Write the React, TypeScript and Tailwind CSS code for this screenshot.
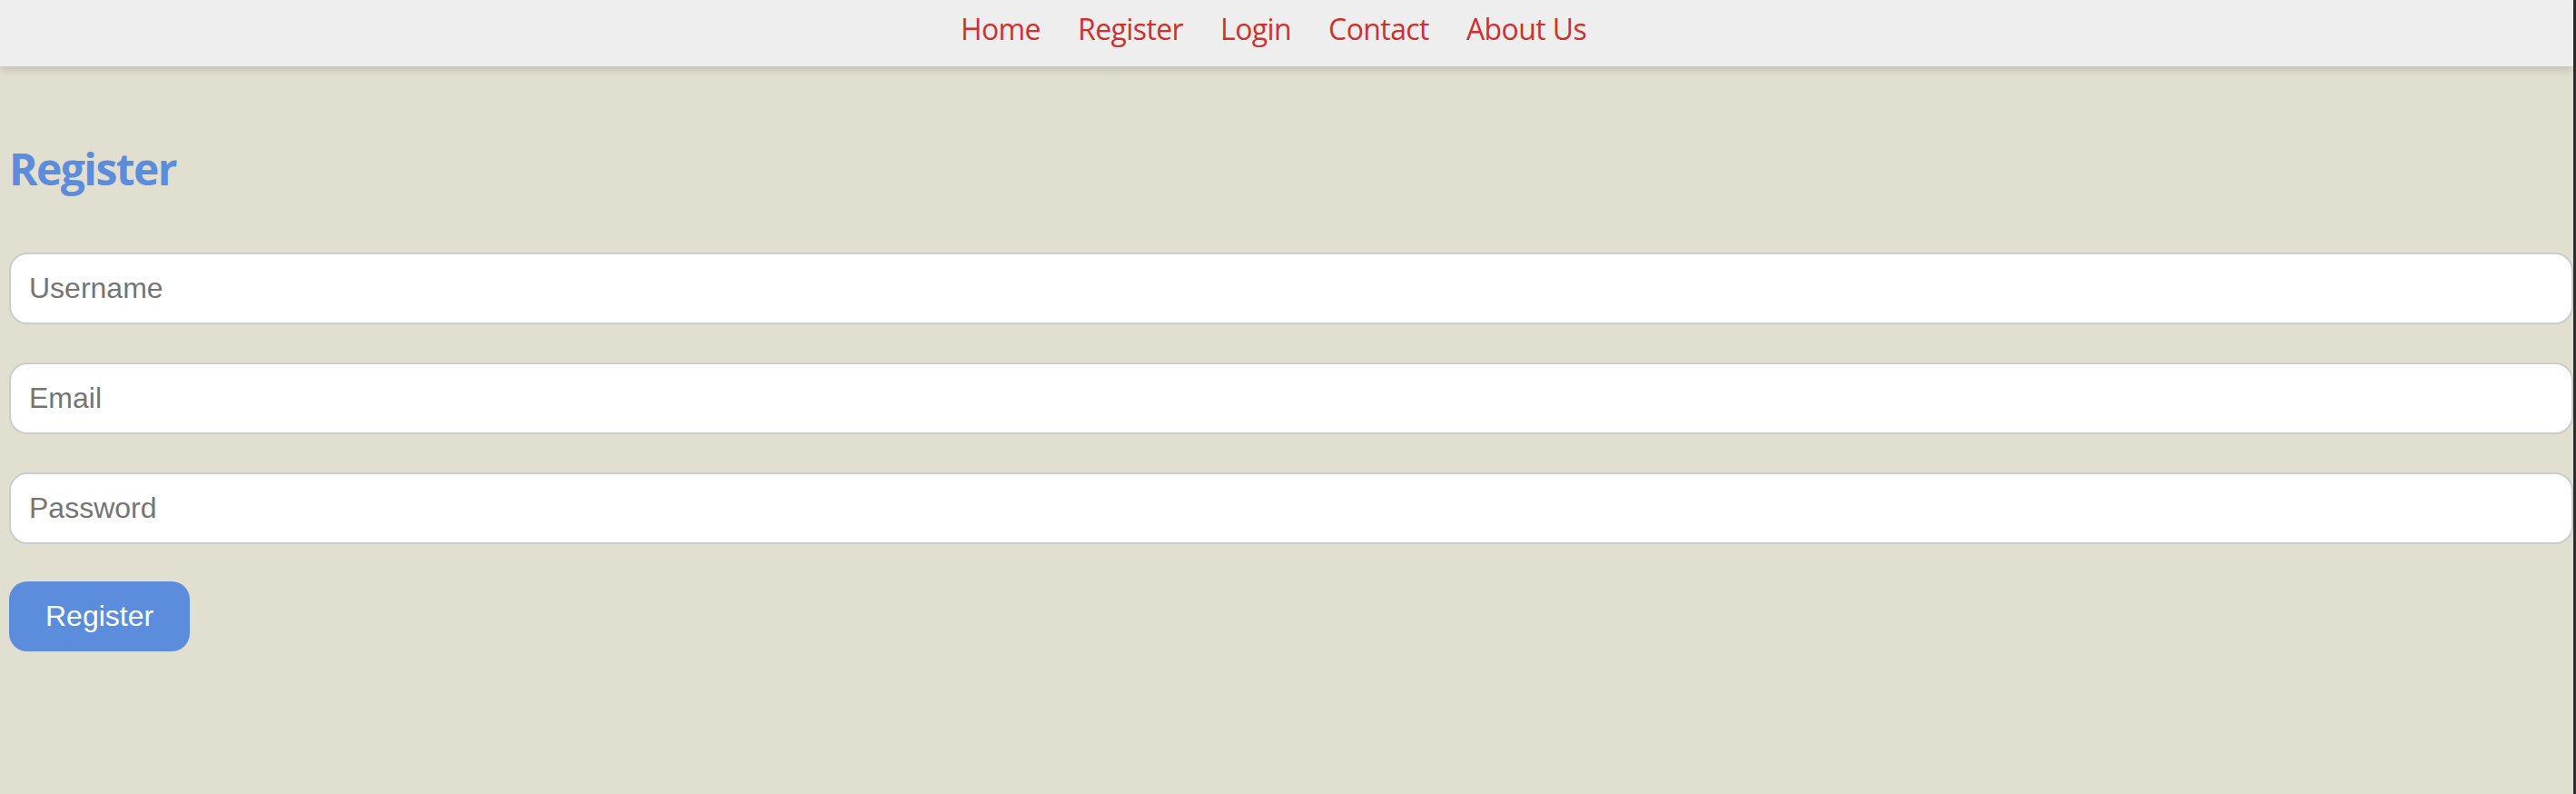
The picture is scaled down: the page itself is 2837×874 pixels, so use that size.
import React from "react";

const links = ["Home", "Register", "Login", "Contact", "About Us"];

const Navbar: React.FC = () => {
  return (
    <nav className="relative z-10 flex h-[73px] items-center justify-center bg-[#eeeeee] pb-[8px] pr-[29px] shadow-[0_4px_10px_rgba(0,0,0,0.14)]">
      <ul className="flex items-center gap-[41px]">
        {links.map((label) => (
          <li key={label}>
            <a
              href="#"
              className="text-[32px] font-medium leading-[32px] tracking-[-0.6px] text-[#d0312d] [font-family:'Open_Sans',sans-serif]"
            >
              {label}
            </a>
          </li>
        ))}
      </ul>
    </nav>
  );
};

const Field: React.FC<{ type: string; placeholder: string }> = ({ type, placeholder }) => {
  return (
    <input
      type={type}
      placeholder={placeholder}
      className="h-[79px] w-full rounded-[20px] border-2 border-[#cccccc] bg-white px-[20px] text-[32px] text-[#333] outline-none placeholder:text-[#757575] [font-family:'Liberation_Sans',Arial,sans-serif]"
    />
  );
};

export default function App() {
  return (
    <div className="min-h-screen w-full border-r-[3px] border-[#2d2d2d] bg-[#e1dfcf]">
      <Navbar />
      <main className="pl-[10px]">
        <h2 className="mt-[89px] text-[48px] font-bold leading-[48px] tracking-[-1.6px] text-[#5b8ddc] [font-family:'Open_Sans',sans-serif]">
          Register
        </h2>
        <form className="mt-[68px] flex flex-col items-start gap-[42px]">
          <Field type="text" placeholder="Username" />
          <Field type="email" placeholder="Email" />
          <Field type="password" placeholder="Password" />
          <button
            type="button"
            className="-mt-[1px] rounded-[20px] bg-[#5b8ddc] px-[40px] py-[20px] text-[32px] leading-[37px] text-white [font-family:'Liberation_Sans',Arial,sans-serif]"
          >
            Register
          </button>
        </form>
      </main>
    </div>
  );
}
